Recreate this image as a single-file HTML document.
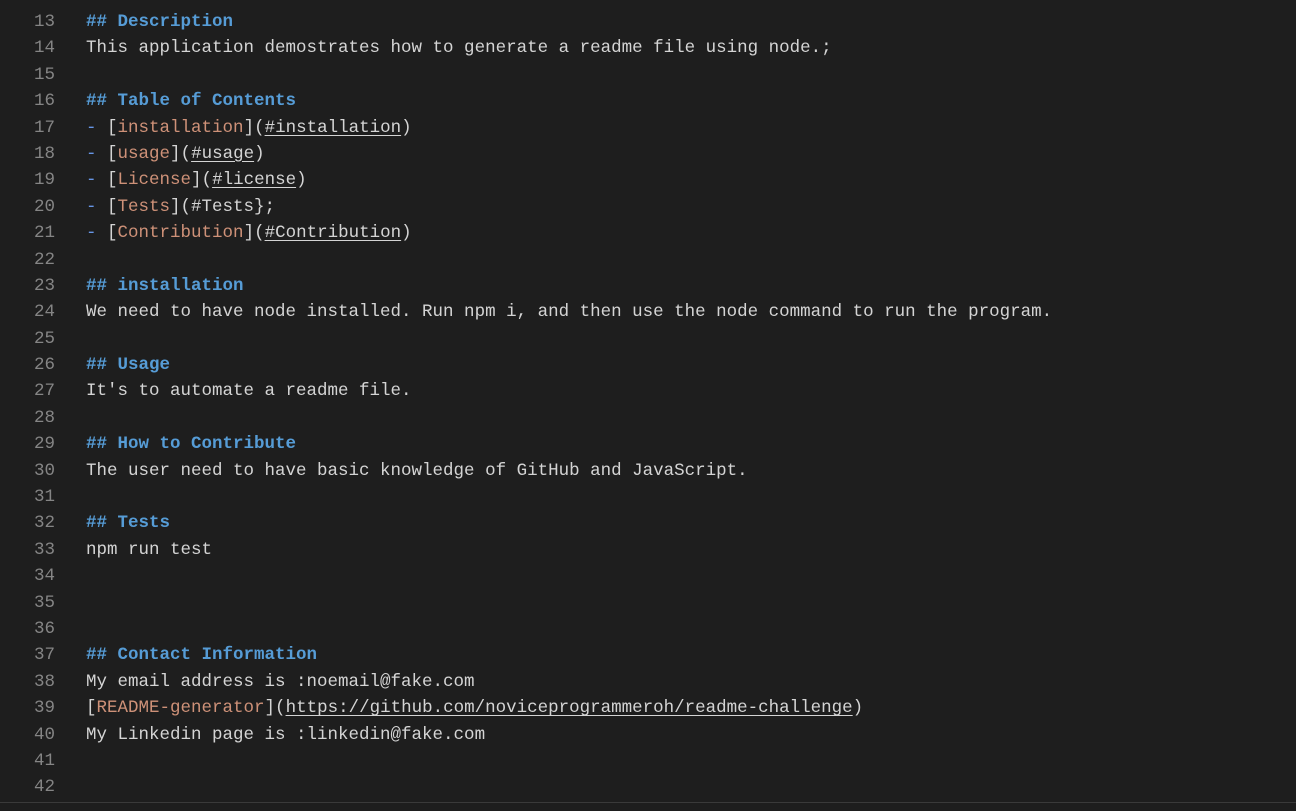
<!DOCTYPE html>
<html><head><meta charset="utf-8"><style>
html,body{margin:0;padding:0;background:#1e1e1e;width:1296px;height:811px;overflow:hidden}
.ed{position:absolute;top:9px;left:0;font-family:"Liberation Mono",monospace;font-size:17.5px;line-height:26.4px;color:#d4d4d4}
.l{height:26.4px;white-space:pre}
.n{display:inline-block;width:55px;text-align:right;color:#858585;margin-right:31px}
.h{color:#569cd6;font-weight:bold}
.s{color:#ce9178}
.d{color:#6796e6}
.u{text-decoration:underline;text-underline-offset:3px}
.bot{position:absolute;left:0;right:0;top:802px;height:1px;background:#3a3a3a}
</style></head><body>
<div class="ed"><div class="l"><span class="n">13</span><span class="h">## Description</span></div><div class="l"><span class="n">14</span>This application demostrates how to generate a readme file using node.;</div><div class="l"><span class="n">15</span></div><div class="l"><span class="n">16</span><span class="h">## Table of Contents</span></div><div class="l"><span class="n">17</span><span class="d">-</span> [<span class="s">installation</span>](<span class="u">#installation</span>)</div><div class="l"><span class="n">18</span><span class="d">-</span> [<span class="s">usage</span>](<span class="u">#usage</span>)</div><div class="l"><span class="n">19</span><span class="d">-</span> [<span class="s">License</span>](<span class="u">#license</span>)</div><div class="l"><span class="n">20</span><span class="d">-</span> [<span class="s">Tests</span>](#Tests};</div><div class="l"><span class="n">21</span><span class="d">-</span> [<span class="s">Contribution</span>](<span class="u">#Contribution</span>)</div><div class="l"><span class="n">22</span></div><div class="l"><span class="n">23</span><span class="h">## installation</span></div><div class="l"><span class="n">24</span>We need to have node installed. Run npm i, and then use the node command to run the program.</div><div class="l"><span class="n">25</span></div><div class="l"><span class="n">26</span><span class="h">## Usage</span></div><div class="l"><span class="n">27</span>It's to automate a readme file.</div><div class="l"><span class="n">28</span></div><div class="l"><span class="n">29</span><span class="h">## How to Contribute</span></div><div class="l"><span class="n">30</span>The user need to have basic knowledge of GitHub and JavaScript.</div><div class="l"><span class="n">31</span></div><div class="l"><span class="n">32</span><span class="h">## Tests</span></div><div class="l"><span class="n">33</span>npm run test</div><div class="l"><span class="n">34</span></div><div class="l"><span class="n">35</span></div><div class="l"><span class="n">36</span></div><div class="l"><span class="n">37</span><span class="h">## Contact Information</span></div><div class="l"><span class="n">38</span>My email address is :noemail@fake.com</div><div class="l"><span class="n">39</span>[<span class="s">README-generator</span>](<span class="u">https://github.com/noviceprogrammeroh/readme-challenge</span>)</div><div class="l"><span class="n">40</span>My Linkedin page is :linkedin@fake.com</div><div class="l"><span class="n">41</span></div><div class="l"><span class="n">42</span></div></div>
<div class="bot"></div>
</body></html>
